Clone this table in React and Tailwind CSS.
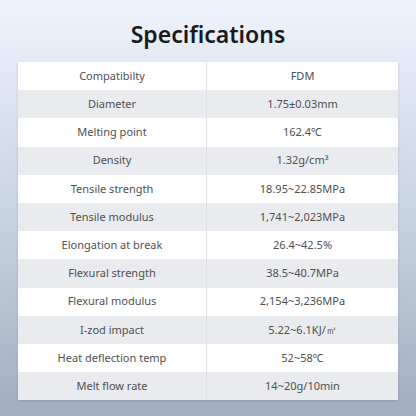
const specs = [
  ['Compatibilty', 'FDM'],
  ['Diameter', '1.75±0.03mm'],
  ['Melting point', '162.4℃'],
  ['Density', '1.32g/cm³'],
  ['Tensile strength', '18.95~22.85MPa'],
  ['Tensile modulus', '1,741~2,023MPa'],
  ['Elongation at break', '26.4~42.5%'],
  ['Flexural strength', '38.5~40.7MPa'],
  ['Flexural modulus', '2,154~3,236MPa'],
  ['I-zod impact', '5.22~6.1KJ/㎡'],
  ['Heat deflection temp', '52~58℃'],
  ['Melt flow rate', '14~20g/10min'],
];

export default function App() {
  return (
    <div
      className="w-[416px] h-[416px] flex flex-col items-center bg-gradient-to-b from-[#eff3fc] via-[#c9d4e4] to-[#a2adbf]"
      style={{ fontFamily: '"Noto Sans", "Open Sans", sans-serif' }}
    >
      <h1 className="mt-[14px] h-[40px] text-[23px] leading-[40px] font-semibold text-[#1a1a1a]">
        Specifications
      </h1>
      <div className="mt-[8px] w-[380px] flex flex-col shadow-sm">
        {specs.map(([label, value], i) => (
          <div
            key={label}
            className={
              'grid grid-cols-[189px_1fr] h-[28.2px] text-[11px] text-[#505050]' +
              (i % 2 === 0 ? ' bg-white' : ' bg-[#e9ebef]')
            }
          >
            <div className="flex items-center justify-center border-r border-[#dcdfe4]">{label}</div>
            <div className="flex items-center justify-center">{value}</div>
          </div>
        ))}
      </div>
    </div>
  );
}
